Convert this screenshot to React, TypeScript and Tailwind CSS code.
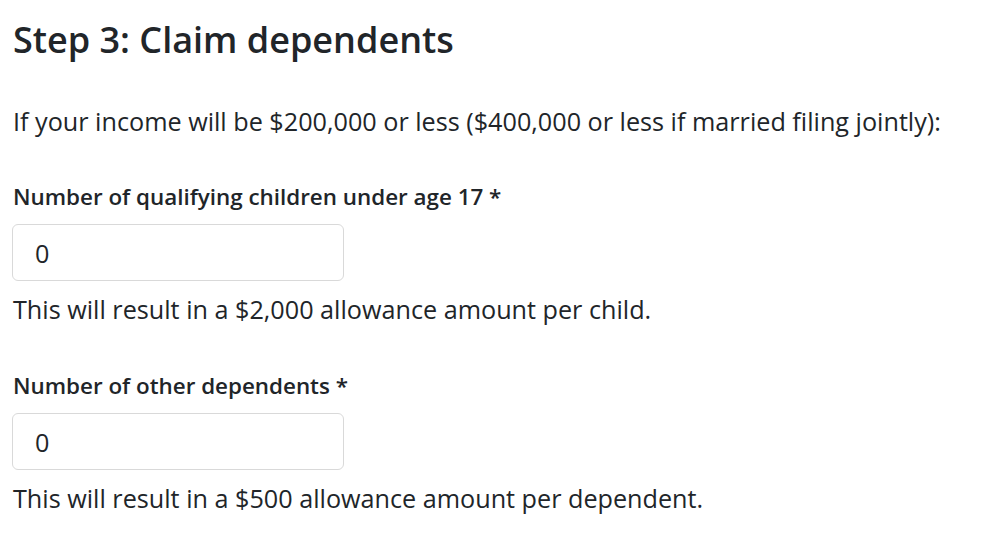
import React from "react";

const ff = { fontFamily: '"Open Sans", sans-serif' };

export default function App() {
  return (
    <div className="bg-white w-[986px] h-[534px] overflow-hidden text-[#212529] px-[13px]" style={ff}>
      <h1 className="text-[36px] font-semibold leading-[44px] pt-[18px]">Step 3: Claim dependents</h1>
      <p className="text-[25.2px] leading-[34px] mt-[42px]">If your income will be $200,000 or less ($400,000 or less if married filing jointly):</p>
      <div className="mt-[44px]">
        <label className="block text-[22.4px] font-semibold leading-[30px]">Number of qualifying children under age 17 *</label>
        <input readOnly value="0" className="mt-[12px] -ml-px block w-[332px] h-[57px] border border-[#d9d9d9] rounded-[6px] px-[22px] text-[25.2px] outline-none text-[#212529]" style={ff} />
        <p className="text-[25.2px] leading-[34px] mt-[11px]">This will result in a $2,000 allowance amount per child.</p>
      </div>
      <div className="mt-[45px]">
        <label className="block text-[22.4px] font-semibold leading-[30px]">Number of other dependents *</label>
        <input readOnly value="0" className="mt-[12px] -ml-px block w-[332px] h-[57px] border border-[#d9d9d9] rounded-[6px] px-[22px] text-[25.2px] outline-none text-[#212529]" style={ff} />
        <p className="text-[25.2px] leading-[34px] mt-[11px]">This will result in a $500 allowance amount per dependent.</p>
      </div>
    </div>
  );
}
